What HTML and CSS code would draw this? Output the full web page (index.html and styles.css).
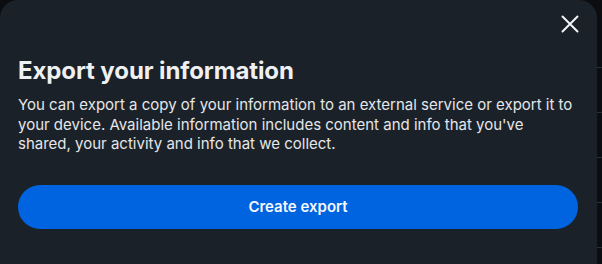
FILE: index.html
```html
<!DOCTYPE html>
<html lang="en">
<head>
<meta charset="utf-8">
<title>Export your information</title>
<link rel="stylesheet" href="styles.css">
</head>
<body>
<div class="page">
  <div class="dialog">
    <div class="dialog-head">
      <button class="close" aria-label="Close">
        <svg width="18" height="18" viewBox="0 0 18 18"><path d="M1.5 1.5 L16.5 16.5 M16.5 1.5 L1.5 16.5" stroke="#f2f4f6" stroke-width="2" stroke-linecap="round"/></svg>
      </button>
    </div>
    <h1 class="title">Export your information</h1>
    <p class="desc">You can export a copy of your information to an external service or export it to your device. Available information includes content and info that you've shared, your activity and info that we collect.</p>
    <button class="primary">Create export</button>
  </div>
  <div class="backdrop-edge">
    <span class="rule"></span>
    <span class="rule"></span>
    <span class="rule"></span>
    <span class="rule"></span>
    <span class="rule"></span>
  </div>
</div>
</body>
</html>
```

FILE: styles.css
```css
* { box-sizing: border-box; }
html, body {
  margin: 0;
  padding: 0;
  background: #0b0d10;
  height: 100%;
  overflow: hidden;
}
.page {
  display: flex;
  height: 264px;
  width: 602px;
  overflow: hidden;
}
.dialog {
  width: 597px;
  flex: none;
  height: 264px;
  background: #1b2128;
  border-radius: 18px 18px 0 0;
  padding: 10px 19px 0 18px;
  font-family: Inter, "Noto Sans", sans-serif;
  color: #e8eaed;
}
.dialog-head {
  display: flex;
  justify-content: flex-end;
  height: 30px;
}
.close {
  width: 30px;
  height: 30px;
  margin-right: -7px;
  margin-top: -1px;
  padding: 0;
  border: 0;
  background: transparent;
  display: flex;
  align-items: center;
  justify-content: center;
}
.title {
  margin: 16px 0 0 0;
  font-size: 24px;
  line-height: 30px;
  font-weight: 700;
  letter-spacing: -0.1px;
  color: #eef0f2;
}
.desc {
  margin: 9px 0 0 0;
  font-size: 15px;
  line-height: 19.5px;
  font-weight: 400;
  color: #e4e6e9;
}
.primary {
  display: block;
  width: 560px;
  height: 44px;
  margin-top: 31px;
  border: 0;
  border-radius: 22px;
  background: #0064e0;
  color: #f5f8ff;
  font-family: Inter, "Noto Sans", sans-serif;
  font-size: 15px;
  font-weight: 600;
}
.backdrop-edge {
  flex: 1;
  display: flex;
  flex-direction: column;
  padding-top: 67px;
  gap: 44px;
}
.rule {
  display: block;
  height: 1px;
  background: #2b2f34;
}
```
